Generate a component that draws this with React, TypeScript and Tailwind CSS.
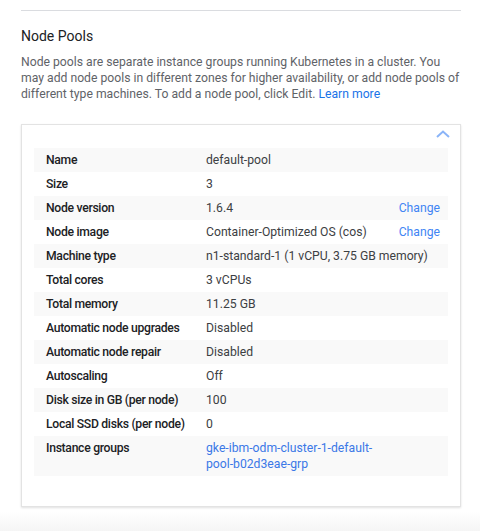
import React from "react";

type Row = { label: string; value: string; change?: boolean; link?: boolean };

const rows: Row[] = [
  { label: "Name", value: "default-pool" },
  { label: "Size", value: "3" },
  { label: "Node version", value: "1.6.4", change: true },
  { label: "Node image", value: "Container-Optimized OS (cos)", change: true },
  { label: "Machine type", value: "n1-standard-1 (1 vCPU, 3.75 GB memory)" },
  { label: "Total cores", value: "3 vCPUs" },
  { label: "Total memory", value: "11.25 GB" },
  { label: "Automatic node upgrades", value: "Disabled" },
  { label: "Automatic node repair", value: "Disabled" },
  { label: "Autoscaling", value: "Off" },
  { label: "Disk size in GB (per node)", value: "100" },
  { label: "Local SSD disks (per node)", value: "0" },
  { label: "Instance groups", value: "gke-ibm-odm-cluster-1-default-pool-b02d3eae-grp", link: true },
];

export default function App() {
  return (
    <div className="w-[480px] h-[531px] overflow-hidden bg-white flex flex-col" style={{ fontFamily: "Roboto, 'Noto Sans', sans-serif" }}>
      <div className="px-[21px] pt-[10px]">
        <div className="border-t border-[#dadce0] w-[440px]" />
        <h2 className="mt-[15px] text-[14px] leading-[20px] text-[#202124]">Node Pools</h2>
        <p className="mt-[8px] text-[12.2px] leading-[16px] text-[#5f6368] w-[440px]">
          Node pools are separate instance groups running Kubernetes in a cluster. You may add node pools in different zones for higher availability, or add node pools of different type machines. To add a node pool, click Edit.{" "}
          <span className="text-[#1a73e8]">Learn more</span>
        </p>
        <div className="mt-[22px] w-[440px] border border-[#e3e3e3] shadow-[0_1px_2px_rgba(0,0,0,0.12)] bg-white px-[12px] pb-[30px]">
          <div className="h-[23px] flex justify-end items-start pt-[5px] -mr-[2px]">
            <svg width="14" height="8" viewBox="0 0 14 8">
              <path d="M1 7 L7 1.5 L13 7" fill="none" stroke="#8ab4f8" strokeWidth="2" />
            </svg>
          </div>
          <div className="flex flex-col">
            {rows.map((r, i) => (
              <div
                key={r.label}
                className={`flex items-start py-[4px] text-[12.2px] leading-[16px] ${i % 2 === 0 ? "bg-[#f9f9f9]" : "bg-white"}`}
              >
                <div className="w-[172px] shrink-0 pl-[12px] font-medium tracking-[-0.3px] text-[#202124]">{r.label}</div>
                {r.link ? (
                  <div className="w-[182px] text-[#3b78e7]">
                    gke-ibm-odm-cluster-1-default-
                    <br />
                    pool-b02d3eae-grp
                  </div>
                ) : (
                  <div className="flex-1 text-[#3c4043]">{r.value}</div>
                )}
                {r.change && <div className="pr-[8px] text-[#4285f4]">Change</div>}
              </div>
            ))}
          </div>
        </div>
      </div>
      <div className="mt-[4px] flex-1 bg-gradient-to-b from-white to-[#f5f5f5]" />
    </div>
  );
}
